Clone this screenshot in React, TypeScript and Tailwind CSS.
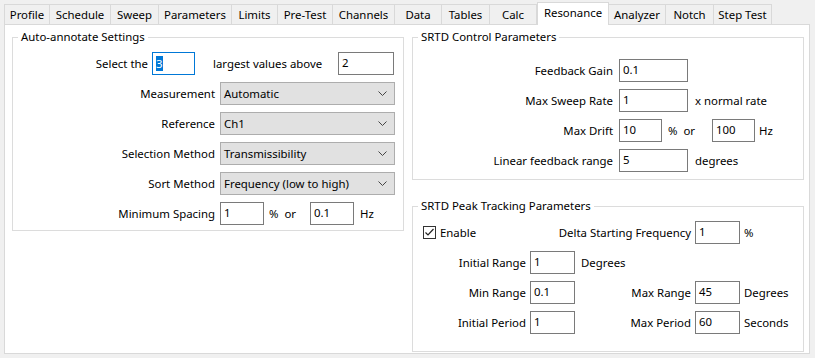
import React from 'react'

const tabs = [
    { name: 'Profile', w: 'w-[46px]' },
    { name: 'Schedule', w: 'w-[61px]' },
    { name: 'Sweep', w: 'w-[48px]' },
    { name: 'Parameters', w: 'w-[73px]' },
    { name: 'Limits', w: 'w-[46px]' },
    { name: 'Pre-Test', w: 'w-[55px]' },
    { name: 'Channels', w: 'w-[62px]' },
    { name: 'Data', w: 'w-[47px]' },
    { name: 'Tables', w: 'w-[48px]' },
    { name: 'Calc', w: 'w-[47px]' },
    { name: 'Resonance', w: 'w-[72px]', active: true },
    { name: 'Analyzer', w: 'w-[57px]' },
    { name: 'Notch', w: 'w-[48px]' },
    { name: 'Step Test', w: 'w-[58px]' },
]

function Box({ value, w }: { value: string; w: string }) {
    return (
        <div
            className={`${w} h-[23px] shrink-0 border border-[#7a7a7a] bg-white pl-[3px] leading-[20px]`}
        >
            {value}
        </div>
    )
}

function Select({ value }: { value: string }) {
    return (
        <div className="flex w-[175px] h-[23px] shrink-0 items-center justify-between border border-[#adadad] bg-[#e1e1e1] pl-[3px] pr-[6px]">
            <span>{value}</span>
            <svg width="9" height="5" viewBox="0 0 9 5" className="mr-[1px]">
                <path d="M0.5 0.5 L4.5 4.5 L8.5 0.5" fill="none" stroke="#444" strokeWidth="1" />
            </svg>
        </div>
    )
}

function Group({
    title,
    className,
    children,
}: {
    title: string
    className: string
    children: React.ReactNode
}) {
    return (
        <fieldset className={`border border-[#dcdcdc] ${className}`}>
            <legend className="ml-[5px] px-[3px] leading-[16px]">{title}</legend>
            {children}
        </fieldset>
    )
}

export default function App() {
    return (
        <div
            className="w-[815px] h-[358px] bg-[#f0f0f0] text-[11.4px] text-black flex flex-col"
            style={{ fontFamily: '"Noto Sans", "Segoe UI", sans-serif' }}
        >
            {/* tab strip */}
            <div className="flex items-end h-[24px] pl-[4px]">
                {tabs.map((t) =>
                    t.active ? (
                        <div
                            key={t.name}
                            className={`${t.w} relative z-10 -mb-[1px] h-[23px] border border-b-0 border-[#d9d9d9] bg-white text-center leading-[19px]`}
                        >
                            {t.name}
                        </div>
                    ) : (
                        <div
                            key={t.name}
                            className={`${t.w} h-[20px] border-t border-r border-[#d9d9d9] first:border-l bg-[#f0f0f0] text-center leading-[20px]`}
                        >
                            {t.name}
                        </div>
                    ),
                )}
            </div>

            {/* page */}
            <div className="mx-[4px] mr-[5px] flex h-[330px] border border-[#d9d9d9] bg-white pl-[7px] pt-[4px]">
                {/* left column */}
                <Group title="Auto-annotate Settings" className="w-[392px] h-[202px] shrink-0 pt-[7px]">
                    <div className="flex flex-col gap-[7px]">
                        <div className="flex items-center">
                            <div className="w-[139px] pr-[4px] text-right">Select the</div>
                            <div className="w-[43px] h-[23px] border border-[#0078d7] pl-[3px] flex items-center">
                                <span className="bg-[#0078d7] text-white leading-[15px]">3</span>
                            </div>
                            <div className="ml-[18px] w-[125px]">largest values above</div>
                            <Box value="2" w="w-[56px]" />
                        </div>
                        {[
                            ['Measurement', 'Automatic'],
                            ['Reference', 'Ch1'],
                            ['Selection Method', 'Transmissibility'],
                            ['Sort Method', 'Frequency (low to high)'],
                        ].map(([label, value]) => (
                            <div key={label} className="flex items-center">
                                <div className="w-[207px] pr-[5px] text-right">{label}</div>
                                <Select value={value} />
                            </div>
                        ))}
                        <div className="flex items-center">
                            <div className="w-[207px] pr-[5px] text-right">Minimum Spacing</div>
                            <Box value="1" w="w-[44px]" />
                            <div className="ml-[5px] w-[41px]">%&nbsp;&nbsp;or</div>
                            <Box value="0.1" w="w-[44px]" />
                            <div className="ml-[6px]">Hz</div>
                        </div>
                    </div>
                </Group>

                {/* right column */}
                <div className="ml-[8px] flex flex-col">
                    <Group title="SRTD Control Parameters" className="w-[392px] h-[151px] pt-[14px]">
                        <div className="flex flex-col gap-[7px]">
                            <div className="flex items-center">
                                <div className="w-[206px] pr-[6px] text-right">Feedback Gain</div>
                                <Box value="0.1" w="w-[69px]" />
                            </div>
                            <div className="flex items-center">
                                <div className="w-[206px] pr-[6px] text-right">Max Sweep Rate</div>
                                <Box value="1" w="w-[69px]" />
                                <div className="ml-[7px]">x normal rate</div>
                            </div>
                            <div className="flex items-center">
                                <div className="w-[206px] pr-[6px] text-right">Max Drift</div>
                                <Box value="10" w="w-[43px]" />
                                <div className="ml-[6px] w-[44px]">%&nbsp;&nbsp;or</div>
                                <Box value="100" w="w-[43px]" />
                                <div className="ml-[4px]">Hz</div>
                            </div>
                            <div className="flex items-center">
                                <div className="w-[206px] pr-[6px] text-right">Linear feedback range</div>
                                <Box value="5" w="w-[69px]" />
                                <div className="ml-[7px]">degrees</div>
                            </div>
                        </div>
                    </Group>

                    <Group title="SRTD Peak Tracking Parameters" className="mt-[18px] w-[392px] h-[154px] pt-[7px]">
                        <div className="flex flex-col gap-[7px]">
                            <div className="flex items-center">
                                <div className="flex w-[282px] items-center justify-between pl-[10px] pr-[4px]">
                                    <div className="flex items-center">
                                        <div className="flex h-[13px] w-[13px] items-center justify-center border border-[#333]">
                                            <svg width="11" height="11" viewBox="0 0 11 11">
                                                <path d="M1.5 5.5 L4 8 L9.5 2" fill="none" stroke="#222" strokeWidth="1.2" />
                                            </svg>
                                        </div>
                                        <span className="ml-[4px]">Enable</span>
                                    </div>
                                    <div>Delta Starting Frequency</div>
                                </div>
                                <Box value="1" w="w-[45px]" />
                                <div className="ml-[4px]">%</div>
                            </div>
                            <div className="flex items-center">
                                <div className="w-[117px] pr-[4px] text-right">Initial Range</div>
                                <Box value="1" w="w-[45px]" />
                                <div className="ml-[6px]">Degrees</div>
                            </div>
                            <div className="flex items-center">
                                <div className="w-[117px] pr-[4px] text-right">Min Range</div>
                                <Box value="0.1" w="w-[45px]" />
                                <div className="w-[120px] pr-[4px] text-right">Max Range</div>
                                <Box value="45" w="w-[45px]" />
                                <div className="ml-[4px]">Degrees</div>
                            </div>
                            <div className="flex items-center">
                                <div className="w-[117px] pr-[4px] text-right">Initial Period</div>
                                <Box value="1" w="w-[45px]" />
                                <div className="w-[120px] pr-[4px] text-right">Max Period</div>
                                <Box value="60" w="w-[45px]" />
                                <div className="ml-[4px]">Seconds</div>
                            </div>
                        </div>
                    </Group>
                </div>
            </div>
        </div>
    )
}
